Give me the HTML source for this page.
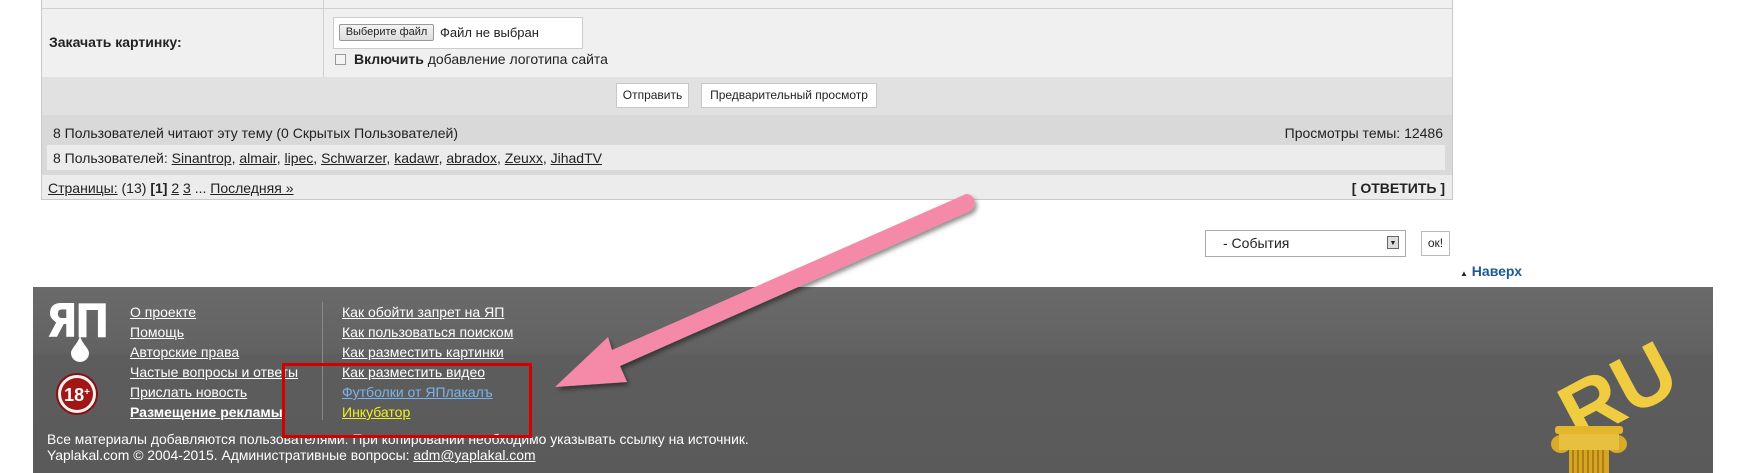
<!DOCTYPE html>
<html><head><meta charset="utf-8"><style>
*{margin:0;padding:0;box-sizing:border-box}
body{width:1753px;height:473px;overflow:hidden;background:#fff;font-family:"Liberation Sans",sans-serif;font-size:14px;color:#222;position:relative}
.a{position:absolute;white-space:nowrap}
u{text-decoration:underline}
.ft{position:absolute;left:33px;top:287px;width:1680px;height:186px;background:linear-gradient(#6a6a6a,#626262 35%,#5d5d5d 37%,#5a5a5a);}
.fl{color:#fff;font-size:14px;text-decoration:underline}
</style></head><body>
<div class="a" style="left:41px;top:0;width:1412px;height:200px;border:1px solid #c8c8c8;border-top:none;background:#ececec"></div>
<div class="a" style="left:42px;top:0;width:1410px;height:9px;background:#f0f0f0;border-bottom:1px solid #d0d0d0"></div>
<div class="a" style="left:42px;top:9px;width:1410px;height:68px;background:#f0f0f0"></div>
<div class="a" style="left:323px;top:0;width:1px;height:77px;background:#d0d0d0"></div>
<div class="a" style="left:49px;top:34px;font-weight:bold;font-size:14px">Закачать картинку:</div>
<div class="a" style="left:333px;top:17px;width:250px;height:32px;background:#fff;border:1px solid #ccc"></div>
<div class="a" style="left:339px;top:24px;width:95px;height:17px;background:linear-gradient(#f4f4f4,#ddd);border:1px solid #999;border-radius:2px;font-size:11px;text-align:center;line-height:15px">Выберите файл</div>
<div class="a" style="left:440px;top:25px;font-size:13px">Файл не выбран</div>
<div class="a" style="left:335px;top:54px;width:11px;height:11px;border:1px solid #999;background:#f4f4f4"></div>
<div class="a" style="left:354px;top:51px;font-size:14px"><b>Включить</b> добавление логотипа сайта</div>
<div class="a" style="left:42px;top:77px;width:1410px;height:38px;background:#e1e1e1"></div>
<div class="a" style="left:616px;top:83px;width:73px;height:25px;background:#fff;border:1px solid #c8c8c8;font-size:12px;text-align:center;line-height:23px">Отправить</div>
<div class="a" style="left:701px;top:83px;width:176px;height:25px;background:#fff;border:1px solid #c8c8c8;font-size:12px;text-align:center;line-height:23px">Предварительный просмотр</div>
<div class="a" style="left:42px;top:115px;width:1410px;height:30px;background:#d9d9d9"></div>
<div class="a" style="left:53px;top:125px;font-size:14px">8 Пользователей читают эту тему (0 Скрытых Пользователей)</div>
<div class="a" style="right:310px;top:125px;font-size:14px">Просмотры темы: 12486</div>
<div class="a" style="left:42px;top:145px;width:1410px;height:30px;background:#d9d9d9"></div>
<div class="a" style="left:47px;top:145px;width:1398px;height:25px;background:#ececec"></div>
<div class="a" style="left:53px;top:150px;font-size:14px">8 Пользователей: <u>Sinantrop</u>, <u>almair</u>, <u>lipec</u>, <u>Schwarzer</u>, <u>kadawr</u>, <u>abradox</u>, <u>Zeuxx</u>, <u>JihadTV</u></div>
<div class="a" style="left:48px;top:180px;font-size:14px"><u>Страницы:</u> (13) <b>[1]</b> <u>2</u> <u>3</u> ... <u>Последняя »</u></div>
<div class="a" style="right:308px;top:180px;font-size:14px;font-weight:bold">[ ОТВЕТИТЬ ]</div>
<div class="a" style="left:1205px;top:230px;width:201px;height:27px;border:1px solid #aaa;background:#fff"></div>
<div class="a" style="left:1223px;top:235px;font-size:14px">- События</div>
<div class="a" style="left:1387px;top:236px;width:12px;height:13px;border:1px solid #666;background:#ddd;font-size:7px;text-align:center;line-height:13px">▼</div>
<div class="a" style="left:1421px;top:231px;width:29px;height:25px;border:1px solid #bbb;background:#fff;font-size:12px;text-align:center;line-height:23px">ок!</div>
<div class="a" style="left:1460px;top:263px;font-size:14px;font-weight:bold;color:#1e5a8c"><span style="font-size:8px;color:#222">▲</span> Наверх</div>
<div class="ft"></div>
<div class="a" style="left:46px;top:298px;font-size:46px;font-weight:bold;color:#fff;letter-spacing:-3px;font-family:'DejaVu Sans Condensed','Liberation Sans',sans-serif;line-height:46px">ЯП</div>
<svg class="a" style="left:68px;top:334px" width="24" height="28"><path d="M12 0 C12 8 3 14 3 19 a9 9 0 0 0 18 0 C21 14 12 8 12 0Z" fill="#fff"/></svg>
<svg class="a" style="left:56px;top:373px" width="42" height="42"><circle cx="21" cy="21" r="20" fill="#f3f3f3" stroke="#8a1010" stroke-width="2"/><circle cx="21" cy="21" r="16" fill="#a21616"/><text x="21" y="28" text-anchor="middle" font-family="Liberation Sans" font-weight="bold" font-size="18" fill="#fff">18<tspan font-size="10" dy="-6">+</tspan></text></svg>
<div class="a" style="left:130px;top:302px;line-height:20px">
<div class="fl">О проекте</div><div class="fl">Помощь</div><div class="fl">Авторские права</div><div class="fl">Частые вопросы и ответы</div><div class="fl">Прислать новость</div><div class="fl" style="font-weight:bold">Размещение рекламы</div></div>
<div class="a" style="left:322px;top:302px;width:1px;height:118px;background:#888"></div>
<div class="a" style="left:342px;top:302px;line-height:20px">
<div class="fl">Как обойти запрет на ЯП</div><div class="fl">Как пользоваться поиском</div><div class="fl">Как разместить картинки</div><div class="fl">Как разместить видео</div><div class="fl" style="color:#7ab4ee">Футболки от ЯПлакалъ</div><div class="fl" style="color:#f0f020">Инкубатор</div></div>
<div class="a" style="left:47px;top:431px;color:#fff;font-size:13.9px;line-height:16px">Все материалы добавляются пользователями. При копировании необходимо указывать ссылку на источник.<br>Yaplakal.com © 2004-2015. Административные вопросы: <u>adm@yaplakal.com</u></div>
<svg class="a" style="left:1545px;top:325px" width="140" height="148">
<text x="72" y="95" text-anchor="middle" font-family="Liberation Sans" font-weight="bold" font-size="82" fill="#f0cc40" transform="rotate(-28 72 65)">RU</text>
<rect x="10" y="101" width="68" height="8" rx="3" fill="#e3b62c"/>
<ellipse cx="16" cy="119" rx="10" ry="9" fill="#d9a928"/><ellipse cx="72" cy="119" rx="10" ry="9" fill="#d9a928"/>
<rect x="14" y="109" width="60" height="16" fill="#e8c040"/>
<rect x="24" y="125" width="40" height="23" fill="#d6a524"/>
<path d="M28 125v23M33 125v23M38 125v23M43 125v23M48 125v23M53 125v23M58 125v23" stroke="#9e7410" stroke-width="1.5"/>
</svg>
<div class="a" style="left:282px;top:363px;width:250px;height:75px;border:3px solid #d40000"></div>
<svg class="a" style="left:0;top:0" width="1753" height="473">
<defs><filter id="s" x="-10%" y="-10%" width="120%" height="130%"><feDropShadow dx="2" dy="3" stdDeviation="2.5" flood-color="#000" flood-opacity="0.45"/></filter></defs>
<path d="M966 194 L612 350 L608 337 L555 387 L627 382 L620 366 L970 211 A9 9 0 0 0 966 194Z" fill="#f48aa8" filter="url(#s)"/>
</svg>
</body></html>
